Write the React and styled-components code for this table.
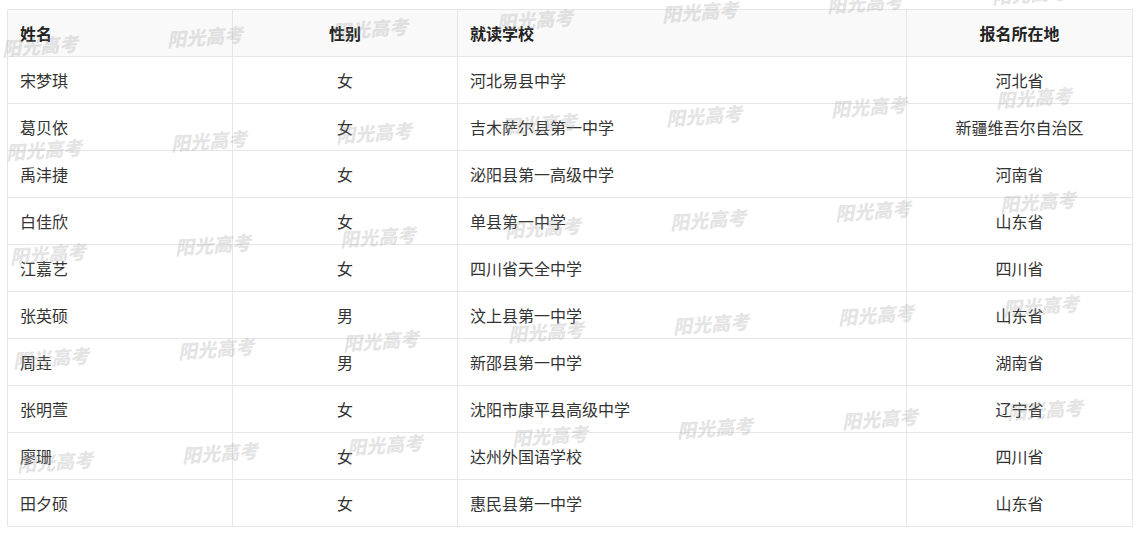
import React from "react";
import styled, { createGlobalStyle } from "styled-components";

const rows = [
  ["宋梦琪", "女", "河北易县中学", "河北省"],
  ["葛贝依", "女", "吉木萨尔县第一中学", "新疆维吾尔自治区"],
  ["禹沣捷", "女", "泌阳县第一高级中学", "河南省"],
  ["白佳欣", "女", "单县第一中学", "山东省"],
  ["江嘉艺", "女", "四川省天全中学", "四川省"],
  ["张英硕", "男", "汶上县第一中学", "山东省"],
  ["周垚", "男", "新邵县第一中学", "湖南省"],
  ["张明萱", "女", "沈阳市康平县高级中学", "辽宁省"],
  ["廖珊", "女", "达州外国语学校", "四川省"],
  ["田夕硕", "女", "惠民县第一中学", "山东省"],
];

// watermark grid: each row of marks drifts up a little to the right
const marks = [];
for (let r = 0; r < 5; r++) {
  for (let c = 0; c < 7; c++) {
    marks.push({
      left: 2 + c * 165 + r * 3.8,
      top: 37 + r * 104 - c * 8.6,
    });
  }
}

const App = () => {
  return (
    <Page>
      <GlobalStyle />
      <Table>
        <colgroup>
          <col style={{ width: 225 }} />
          <col style={{ width: 225 }} />
          <col style={{ width: 449 }} />
          <col style={{ width: 226 }} />
        </colgroup>
        <thead>
          <tr>
            <Th>姓名</Th>
            <Th align="center">性别</Th>
            <Th>就读学校</Th>
            <Th align="center">报名所在地</Th>
          </tr>
        </thead>
        <tbody>
          {rows.map((row, i) => (
            <tr key={i}>
              <Td>{row[0]}</Td>
              <Td align="center">{row[1]}</Td>
              <Td>{row[2]}</Td>
              <Td align="center">{row[3]}</Td>
            </tr>
          ))}
        </tbody>
      </Table>
      <MarkLayer>
        {marks.map((m, i) => (
          <Mark key={i} style={{ left: m.left, top: m.top }}>
            阳光高考
          </Mark>
        ))}
      </MarkLayer>
    </Page>
  );
};

export default App;

const GlobalStyle = createGlobalStyle`
  body {
    margin: 0;
    background: #fff;
    font-family: "Noto Sans CJK SC", "Liberation Sans", sans-serif;
  }
`;

const Page = styled.div`
  position: relative;
  width: 1143px;
  height: 538px;
  padding: 9px 0 0 7px;
  box-sizing: border-box;
  overflow: hidden;
`;

const Table = styled.table`
  width: 1125px;
  table-layout: fixed;
  border-collapse: collapse;
  border: 1px solid #e6e6e6;
  font-size: 16px;
  color: #333;
`;

const Th = styled.th`
  height: 46px;
  padding: 0 12px;
  border: 1px solid #e6e6e6;
  background: #f9f9f9;
  font-weight: bold;
  text-align: ${({ align }) => align || "left"};
  color: #222;
`;

const Td = styled.td`
  height: 46px;
  padding: 0 12px;
  border: 1px solid #e6e6e6;
  text-align: ${({ align }) => align || "left"};
`;

const MarkLayer = styled.div`
  position: absolute;
  inset: 0;
  overflow: hidden;
  pointer-events: none;
`;

const Mark = styled.span`
  position: absolute;
  font-size: 19px;
  font-weight: 900;
  font-style: italic;
  line-height: 22px;
  white-space: nowrap;
  color: rgba(150, 150, 150, 0.26);
  transform: rotate(-4deg);
  transform-origin: left center;
`;
